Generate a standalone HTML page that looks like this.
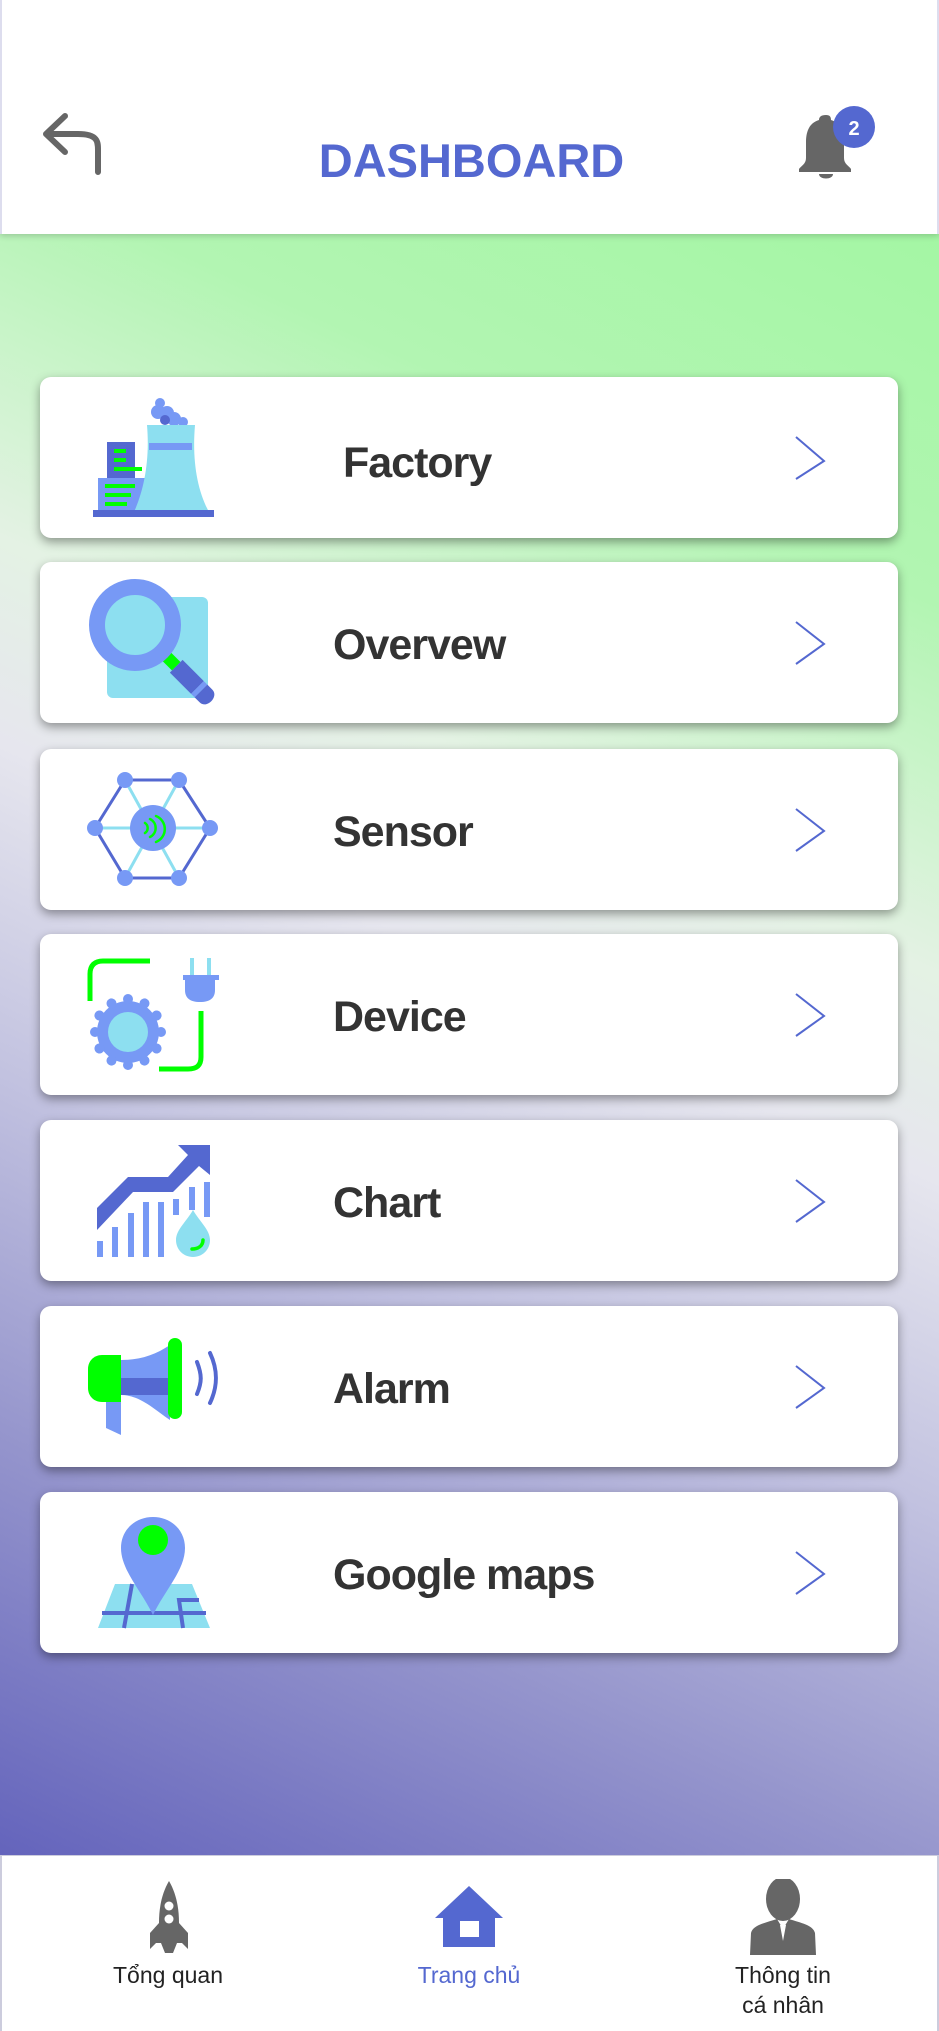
<!DOCTYPE html>
<html><head><meta charset="utf-8"><style>
*{margin:0;padding:0;box-sizing:border-box}
body{width:939px;height:2031px;position:relative;overflow:hidden;font-family:"Liberation Sans","DejaVu Sans",sans-serif;background:#fff}
.bg{position:absolute;left:0;top:234px;width:939px;height:1621px;background:linear-gradient(205deg,#a4f6a4 0%,#b2f5b2 18%,#e4f2e4 36%,#e6e6ee 46%,#c2c2e0 62%,#9494cc 80%,#6464bc 100%)}
.header{position:absolute;left:0;top:0;width:939px;height:234px;background:#fff;box-shadow:0 2px 6px rgba(0,0,0,.18);border-left:2px solid #dde;border-right:2px solid #dde}
.title{position:absolute;left:0;width:939px;top:133px;text-align:center;color:#5468d0;font-weight:bold;font-size:47px;letter-spacing:0px}
.card{position:absolute;left:40px;width:858px;height:161px;background:#fff;border-radius:11px;box-shadow:0 4px 10px rgba(0,0,0,.38)}
.card .t{position:absolute;left:293px;top:3px;line-height:161px;font-size:43px;letter-spacing:-1px;font-weight:bold;color:#333}
.card .chev{position:absolute;left:752px;top:58px}
.ic{position:absolute;left:80px}
.nav{position:absolute;left:0;top:1855px;width:939px;height:176px;background:#fff;border-top:1px solid #ccd;border-left:2px solid #ccd;border-right:2px solid #ccd}
.lbl{position:absolute;font-size:23px;color:#222;text-align:center;line-height:30px}
</style></head><body>
<div class="bg"></div>
<div class="header">
<svg style="position:absolute;left:38px;top:112px" width="64" height="64" viewBox="0 0 64 64"><path d="M23 4 L4 22 L23 40 M4 22 C18 22 30 22 36 22 C56 22 56 30 56 38 L56 60" fill="none" stroke="#666" stroke-width="6" stroke-linecap="round" stroke-linejoin="round" transform="translate(2,0)"/></svg>
<div class="title">DASHBOARD</div>
<svg style="position:absolute;left:795px;top:100px" width="85" height="85" viewBox="0 -10 85 85"><path d="M29 5 C33 5 34 7 34 10 C44 13 47 22 47 32 L47 48 C47 54 52 56 54 59 L54 62 L2 62 L2 59 C4 56 9 54 9 48 L9 32 C9 22 12 13 22 10 C22 7 24 5 29 5Z" fill="#666"/><path d="M22 64 L36 64 C36 70 22 70 22 64Z" fill="#666"/><circle cx="57" cy="17" r="21" fill="#5468d0"/><text x="57" y="25" font-family="Liberation Sans" font-weight="bold" font-size="20" fill="#fff" text-anchor="middle">2</text></svg>
</div>

<div class="card" style="top:377px"><div class="t" style="left:303px;top:6px">Factory</div><svg class="chev" width="40" height="46" viewBox="0 0 40 46"><path d="M4 2 L32 26 L4 44" fill="none" stroke="#5468d0" stroke-width="2"/></svg></div>
<div class="card" style="top:562px"><div class="t">Overvew</div><svg class="chev" width="40" height="46" viewBox="0 0 40 46"><path d="M4 2 L32 24 L4 44" fill="none" stroke="#5468d0" stroke-width="2"/></svg></div>
<div class="card" style="top:749px"><div class="t">Sensor</div><svg class="chev" width="40" height="46" viewBox="0 0 40 46"><path d="M4 2 L32 24 L4 44" fill="none" stroke="#5468d0" stroke-width="2"/></svg></div>
<div class="card" style="top:934px"><div class="t">Device</div><svg class="chev" width="40" height="46" viewBox="0 0 40 46"><path d="M4 2 L32 24 L4 44" fill="none" stroke="#5468d0" stroke-width="2"/></svg></div>
<div class="card" style="top:1120px"><div class="t">Chart</div><svg class="chev" width="40" height="46" viewBox="0 0 40 46"><path d="M4 2 L32 24 L4 44" fill="none" stroke="#5468d0" stroke-width="2"/></svg></div>
<div class="card" style="top:1306px"><div class="t">Alarm</div><svg class="chev" width="40" height="46" viewBox="0 0 40 46"><path d="M4 2 L32 24 L4 44" fill="none" stroke="#5468d0" stroke-width="2"/></svg></div>
<div class="card" style="top:1492px"><div class="t">Google maps</div><svg class="chev" width="40" height="46" viewBox="0 0 40 46"><path d="M4 2 L32 24 L4 44" fill="none" stroke="#5468d0" stroke-width="2"/></svg></div>

<!-- factory -->
<svg class="ic" style="left:80px;top:390px" width="150" height="135" viewBox="80 390 150 135">
<circle cx="160" cy="403" r="5" fill="#7799f5"/><circle cx="158" cy="412" r="7" fill="#7799f5"/><circle cx="167" cy="413" r="7" fill="#7799f5"/><circle cx="174" cy="419" r="7" fill="#7799f5"/><circle cx="165" cy="420" r="5" fill="#5468d0"/><circle cx="183" cy="422" r="5" fill="#7799f5"/>
<rect x="107" y="442" width="28" height="40" fill="#5468d0"/>
<rect x="98" y="478" width="50" height="34" fill="#7799f5"/>
<rect x="114" y="449" width="12" height="4" fill="#0f0"/><rect x="114" y="458" width="12" height="4" fill="#0f0"/><rect x="114" y="467" width="28" height="4" fill="#0f0"/>
<rect x="105" y="484" width="30" height="4" fill="#0f0"/><rect x="105" y="493" width="26" height="4" fill="#0f0"/><rect x="105" y="502" width="22" height="4" fill="#0f0"/>
<path d="M147 425 L195 425 C192 460 197 490 209 512 L134 512 C144 490 150 460 147 425Z" fill="#8ddff0"/>
<rect x="149" y="443" width="43" height="7" fill="#7799f5"/>
<rect x="93" y="510" width="121" height="7" fill="#5468d0"/>
</svg>
<!-- overview -->
<svg class="ic" style="top:570px" width="150" height="150" viewBox="0 0 150 150">
<rect x="27" y="27" width="101" height="101" rx="6" fill="#8ddff0"/>
<g transform="rotate(-45 92 92)"><rect x="86" y="84" width="12" height="14" fill="#0f0"/><rect x="83" y="98" width="18" height="30" fill="#5468d0"/><rect x="83" y="128" width="18" height="5" fill="#7799f5"/><path d="M83 133 L101 133 L101 140 C101 150 83 150 83 140Z" fill="#5468d0"/></g>
<circle cx="55" cy="55" r="38" fill="#8ddff0" stroke="#7799f5" stroke-width="16"/>
</svg>
<!-- sensor -->
<svg class="ic" style="top:770px" width="150" height="120" viewBox="0 200 150 120">
<g stroke="#8ddff0" stroke-width="3"><line x1="45" y1="210" x2="99" y2="308"/><line x1="99" y1="210" x2="45" y2="308"/><line x1="15" y1="258" x2="130" y2="258"/></g>
<polygon points="45,210 99,210 130,258 99,308 45,308 15,258" fill="none" stroke="#5468d0" stroke-width="3"/>
<g fill="#7799f5"><circle cx="45" cy="210" r="8"/><circle cx="99" cy="210" r="8"/><circle cx="130" cy="258" r="8"/><circle cx="99" cy="308" r="8"/><circle cx="45" cy="308" r="8"/><circle cx="15" cy="258" r="8"/><circle cx="73" cy="258" r="23"/></g>
<g fill="none" stroke="#0f0" stroke-width="2.5" stroke-linecap="round"><path d="M65 253 A6 6 0 0 1 65 263"/><path d="M70 249 A10 10 0 0 1 70 267"/><path d="M76 246 A14 14 0 0 1 76 272"/></g>
</svg>
<!-- device -->
<svg class="ic" style="top:955px" width="150" height="120" viewBox="0 385 150 120">
<path d="M10 431 L10 404 C10 395 15 391 23 391 L70 391" fill="none" stroke="#0f0" stroke-width="5"/>
<path d="M121 441 L121 487 C121 496 116 499 108 499 L79 499" fill="none" stroke="#0f0" stroke-width="5"/>
<rect x="110" y="388" width="4" height="20" fill="#8ddff0"/><rect x="127" y="388" width="4" height="20" fill="#8ddff0"/>
<rect x="103" y="405" width="36" height="5" fill="#7799f5"/><path d="M105 410 L135 410 L135 420 C135 428 130 432 120 432 C110 432 105 428 105 420Z" fill="#7799f5"/>
<g fill="#7799f5" transform="translate(48 462)"><circle r="31"/>
<g id="t"><circle cx="0" cy="-33" r="5"/></g><use href="#t" transform="rotate(30)"/><use href="#t" transform="rotate(60)"/><use href="#t" transform="rotate(90)"/><use href="#t" transform="rotate(120)"/><use href="#t" transform="rotate(150)"/><use href="#t" transform="rotate(180)"/><use href="#t" transform="rotate(210)"/><use href="#t" transform="rotate(240)"/><use href="#t" transform="rotate(270)"/><use href="#t" transform="rotate(300)"/><use href="#t" transform="rotate(330)"/>
<circle r="20" fill="#8ddff0"/></g>
</svg>
<!-- chart -->
<svg class="ic" style="top:1140px" width="150" height="120" viewBox="0 10 150 120">
<polygon points="17,78 48,47 88,47 108,25 98,15 130,15 130,45 119,36 93,62 53,62 17,100" fill="#5468d0"/>
<g fill="#7799f5"><rect x="17" y="111" width="6" height="16"/><rect x="32" y="97" width="6" height="30"/><rect x="48" y="83" width="6" height="44"/><rect x="63" y="72" width="6" height="55"/><rect x="78" y="72" width="6" height="55"/><rect x="93" y="69" width="6" height="16"/><rect x="109" y="57" width="6" height="23"/><rect x="124" y="52" width="6" height="35"/></g>
<path d="M113 80 C106 92 96 100 96 110 C96 120 104 127 113 127 C122 127 130 120 130 110 C130 100 120 92 113 80Z" fill="#8ddff0"/>
<path d="M123 110 C123 116 118 119 112 119" fill="none" stroke="#0f0" stroke-width="3.5" stroke-linecap="round"/>
</svg>
<!-- alarm -->
<svg class="ic" style="top:1330px" width="150" height="110" viewBox="0 200 150 110">
<path d="M26 272 L41 272 L41 305 L26 298Z" fill="#7799f5"/>
<path d="M41 230 C60 230 75 225 90 215 L90 290 C75 280 60 265 41 265Z" fill="#7799f5"/>
<rect x="41" y="248" width="49" height="17" fill="#5468d0"/>
<path d="M22 225 L41 225 L41 272 L22 272 C14 272 8 266 8 258 L8 239 C8 231 14 225 22 225Z" fill="#0f0"/>
<rect x="88" y="208" width="14" height="81" rx="7" fill="#0f0"/>
<g fill="none" stroke="#5468d0" stroke-width="4" stroke-linecap="round"><path d="M117 232 C122 245 122 252 117 264"/><path d="M130 223 C138 240 138 256 130 273"/></g>
</svg>
<!-- maps -->
<svg class="ic" style="top:1515px" width="150" height="120" viewBox="0 385 150 120">
<polygon points="18,498 35,454 112,454 130,498" fill="#8ddff0"/>
<g stroke="#5468d0" stroke-width="4" fill="none"><path d="M52 454 L44 498"/><path d="M22 483 L126 483"/><path d="M119 470 L99 470 L103 498"/></g>
<path d="M73 387 C91 387 105 400 105 418 C105 440 85 460 73 485 C61 460 41 440 41 418 C41 400 55 387 73 387Z" fill="#7799f5"/>
<circle cx="73" cy="410" r="15" fill="#0f0"/>
</svg>

<div class="nav"></div>
<svg style="position:absolute;left:148px;top:1881px" width="42" height="72" viewBox="0 0 42 72"><path d="M21 0 C28 12 31 26 31 42 L40 52 L40 68 L34 62 L29 62 L25 72 L17 72 L13 62 L8 62 L2 68 L2 52 L11 42 C11 26 14 12 21 0Z" fill="#666"/><circle cx="21" cy="25" r="4.5" fill="#fff"/><circle cx="21" cy="38" r="4.5" fill="#fff"/></svg>
<svg style="position:absolute;left:435px;top:1886px" width="68" height="62" viewBox="0 0 68 62"><path d="M34 0 L68 32 L0 32Z" fill="#5468d0"/><rect x="8" y="30" width="52" height="31" fill="#5468d0"/><rect x="25" y="35" width="19" height="16" fill="#fff"/></svg>
<svg style="position:absolute;left:749px;top:1879px" width="68" height="76" viewBox="0 0 68 76"><ellipse cx="34" cy="20" rx="17" ry="22" fill="#666"/><path d="M2 54 C4 46 16 44 28 40 L34 50 L40 40 C52 44 64 46 66 54 L67 76 L1 76Z" fill="#666"/><path d="M31 46 L34 62 L37 46" fill="#fff"/></svg>
<div class="lbl" style="left:88px;width:160px;top:1960px">Tổng quan</div>
<div class="lbl" style="left:389px;width:160px;top:1960px;color:#5468d0">Trang chủ</div>
<div class="lbl" style="left:703px;width:160px;top:1960px">Thông tin<br>cá nhân</div>
</body></html>
